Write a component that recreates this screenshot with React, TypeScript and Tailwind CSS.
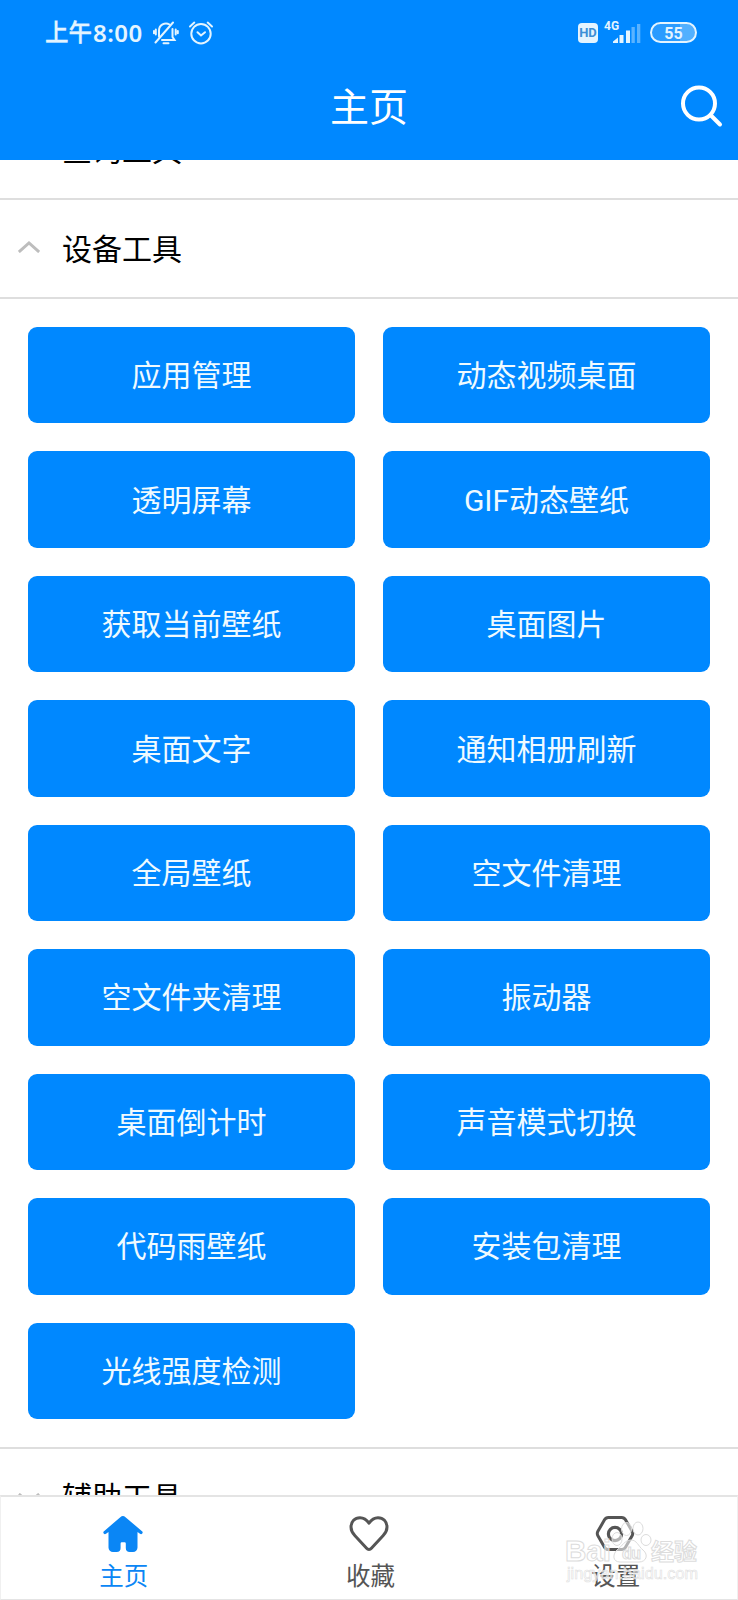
import { clsx } from 'clsx'

const tools = [
  '应用管理',
  '动态视频桌面',
  '透明屏幕',
  'GIF动态壁纸',
  '获取当前壁纸',
  '桌面图片',
  '桌面文字',
  '通知相册刷新',
  '全局壁纸',
  '空文件清理',
  '空文件夹清理',
  '振动器',
  '桌面倒计时',
  '声音模式切换',
  '代码雨壁纸',
  '安装包清理',
  '光线强度检测',
]

const tabs = [
  { name: '主页', icon: HomeIcon, active: true },
  { name: '收藏', icon: HeartIcon, active: false },
  { name: '设置', icon: NutIcon, active: false },
]

function HomeIcon() {
  return (
    <svg className="mr-[2px]" width="40" height="38" viewBox="0 0 40 38" fill="currentColor">
      <path d="M17.3 2.2a3.8 3.8 0 0 1 5.2 0L39 16.2a1.600 1.600 0 0 1-2 2.500L34.500 17v15.500a4.500 4.500 0 0 1-4.500 4.500h-3.200a4 4 0 0 1-4-4v-4.500a1.200 1.200 0 0 0-1.200-1.200h-2.800a1.200 1.200 0 0 0-1.200 1.200V33a4 4 0 0 1-4 4h-3.600a4.500 4.500 0 0 1-4.500-4.500V17l-2.500 1.700a1.600 1.600 0 0 1-2-2.500z" />
    </svg>
  )
}

function HeartIcon() {
  return (
    <svg width="40" height="38" viewBox="0 0 40 38" fill="none" stroke="currentColor" strokeWidth="3" strokeLinejoin="round">
      <path d="M20 8.200C17.500 4.500 14.500 2.700 11 2.700 5.800 2.700 2 6.600 2 12c0 3.600 1.500 6.200 4 8.800L17.600 33.300a3.200 3.200 0 0 0 4.800 0L34 20.800c2.500-2.600 4-5.200 4-8.800 0-5.400-3.800-9.300-9-9.300-3.500 0-6.500 1.800-9 5.500z" />
    </svg>
  )
}

function NutIcon() {
  return (
    <svg className="ml-[2px]" width="40" height="38" viewBox="0 0 40 38" fill="none" stroke="currentColor" strokeLinejoin="round">
      <path
        d="M13.500 2.500h13a4.500 4.500 0 0 1 4 2.300l6.600 11.500a4.500 4.500 0 0 1 0 4.400l-6.600 11.500a4.500 4.500 0 0 1-4 2.300h-13a4.500 4.500 0 0 1-4-2.300L2.900 20.700a4.500 4.500 0 0 1 0-4.400L9.500 4.800a4.500 4.500 0 0 1 4-2.300z"
        strokeWidth="3"
      />
      <circle cx="20" cy="19" r="6.600" strokeWidth="3.200" />
    </svg>
  )
}

function MutedBellIcon() {
  return (
    <svg width="26" height="24" viewBox="0 0 26 24" fill="none" stroke="currentColor" strokeWidth="2" strokeLinecap="round">
      <path d="M6 15.500V9.500a7 7 0 0 1 10.500-6M19.500 8v8l2 3H9" />
      <path d="M10.500 22.200h5M2.500 21.500 20 1.500M2.800 8.500v5M.9 10v2.200M22.700 8.500v5M24.800 10v2.200" />
    </svg>
  )
}

function AlarmIcon() {
  return (
    <svg width="26" height="24" viewBox="0 0 26 24" fill="none" stroke="currentColor" strokeWidth="2" strokeLinecap="round">
      <circle cx="13" cy="12.700" r="9.700" />
      <path d="m9.500 11.200 3.500 3.300 4-3.300M2 5.500l4.300-3.900M24 5.500l-4.300-3.900" />
    </svg>
  )
}

function StatusBar() {
  return (
    <div className="flex h-[60px] items-center pt-[5px] pr-[41px] pl-[45px] text-[#e3f4ff]">
      <span className="pt-[3px] text-[23.500px] leading-none font-medium [-webkit-text-stroke:0.300px]">上午</span>
      <span className="w-[52px] pl-px font-['Noto_Sans'] text-[24px] leading-none font-semibold tracking-[0.500px]">8:00</span>
      <div className="ml-[9px] flex items-center gap-[9px]">
        <MutedBellIcon />
        <AlarmIcon />
      </div>
      <div className="ml-auto flex items-center">
        <span className="flex h-[20px] w-[20px] items-center justify-center rounded-[4px] bg-[#e3f4ff] font-['Roboto'] text-[13px] font-bold text-[#3b8fd6]">
          HD
        </span>
        <svg className="-mt-[3px] ml-[6px] overflow-visible" width="38" height="24" viewBox="0 0 38 24" fill="currentColor">
          <text x="0" y="10.500" fontSize="12" fontWeight="700" fontFamily="Roboto, sans-serif">4G</text>
          <path d="M9 24v-1.500l5-4V24zM15.500 16h4v8h-4zM22 11.500h4V24h-4z" />
          <path d="M27.500 8h3.300v16h-3.300zM33 5h3.300v19H33z" opacity="0.400" />
        </svg>
        <div className="ml-[8px] flex h-[21px] w-[47px] items-center justify-center rounded-full border-2 border-[#e3f4ff] bg-linear-to-r from-[#2a9bff] from-65% to-[#52b0ff] to-65% pt-[2px] font-['Roboto'] text-[16px] leading-none font-bold">
          55
        </div>
      </div>
    </div>
  )
}

function SectionRow({ title, open = false }: { title: string; open?: boolean }) {
  return (
    <div className="flex h-[99px] shrink-0 items-center border-b-2 border-[#dedede] pl-[18px]">
      <svg
        className={clsx(open ? '-mt-[3px]' : 'mt-[3px] rotate-180')}
        width="22"
        height="12"
        viewBox="0 0 22 12"
        fill="none"
        stroke="#bdbdbd"
        strokeWidth="3"
      >
        <path d="M.8 11 11 2l10.200 9" />
      </svg>
      <h2 className="ml-[22px] pt-[2px] text-[30px] leading-none text-black">{title}</h2>
    </div>
  )
}

function Watermark() {
  return (
    <svg
      className="pointer-events-none absolute right-[38px] bottom-[12px]"
      width="136"
      height="70"
      viewBox="0 0 136 70"
      fill="#ffffff"
      fillOpacity="0.550"
      stroke="#dcdcdc"
      strokeWidth="1"
      fontFamily="'Liberation Sans', 'Noto Sans CJK SC', sans-serif"
    >
      <text x="1" y="43" fontSize="30" fontWeight="700" textLength="46" lengthAdjust="spacingAndGlyphs">Bai</text>
      <ellipse cx="53" cy="21" rx="5" ry="6.500" />
      <ellipse cx="62.500" cy="11" rx="5" ry="6.500" />
      <ellipse cx="74" cy="10.500" rx="5" ry="6.500" />
      <ellipse cx="82" cy="22" rx="5" ry="5.500" />
      <path d="M67 22c6 0 7 6 12 10 6 5 3 12-4 12H56c-7 0-8-7-3-12 5-4 8-10 14-10z" />
      <text x="58" y="41" fontSize="16" fontWeight="700" textLength="19">du</text>
      <text x="87" y="42" fontSize="23" fontWeight="700" textLength="46">经验</text>
      <text x="3" y="61" fontSize="16.500" stroke="#e0e0e0" strokeWidth="0.600" textLength="131" lengthAdjust="spacingAndGlyphs">
        jingyan.baidu.com
      </text>
    </svg>
  )
}

export default function App() {
  return (
    <div className="relative flex h-[1600px] w-[738px] flex-col overflow-hidden bg-white font-['Roboto','Noto_Sans_CJK_SC',sans-serif]">
      <header className="h-[160px] shrink-0 bg-[#0088ff]">
        <StatusBar />
        <div className="grid h-[92px] grid-cols-[1fr_auto_1fr] items-center text-white">
          <h1 className="col-start-2 pt-[4px] text-[39px] leading-none">主页</h1>
          <svg className="mr-[14px] justify-self-end" width="44" height="44" viewBox="0 0 44 44" fill="none" stroke="currentColor" strokeWidth="4" strokeLinecap="round">
            <circle cx="19" cy="19.500" r="16" />
            <path d="m30.500 31 9.500 9.500" />
          </svg>
        </div>
      </header>

      <main className="min-h-0 flex-1 overflow-hidden">
        <div className="-mt-[59px] flex flex-col">
          <SectionRow title="查询工具" />
          <SectionRow title="设备工具" open />
          <div className="grid auto-rows-[96.440px] grid-cols-2 gap-[28px] border-b-2 border-[#dedede] p-[28px]">
            {tools.map((tool) => (
              <button key={tool} type="button" className="rounded-[9px] bg-[#0088ff] pt-[2px] text-[30px] leading-none text-[#effaff]">
                {tool}
              </button>
            ))}
          </div>
          <SectionRow title="辅助工具" />
        </div>
      </main>

      {/* Bottom tabs */}
      <nav className="grid h-[105px] shrink-0 grid-cols-3 border-x border-t-2 border-b border-[#e4e4e4] border-x-[#f0f0f0] bg-white">
        {tabs.map((tab) => (
          <div
            key={tab.name}
            className={clsx('flex flex-col items-center pt-[18px]', tab.active ? 'text-[#0a86f5]' : 'text-[#555555]')}
          >
            <tab.icon />
            <span className={clsx('mt-[12px] text-[24.500px] leading-none', !tab.active && 'pl-[3px]')}>{tab.name}</span>
          </div>
        ))}
      </nav>
      <Watermark />
    </div>
  )
}
